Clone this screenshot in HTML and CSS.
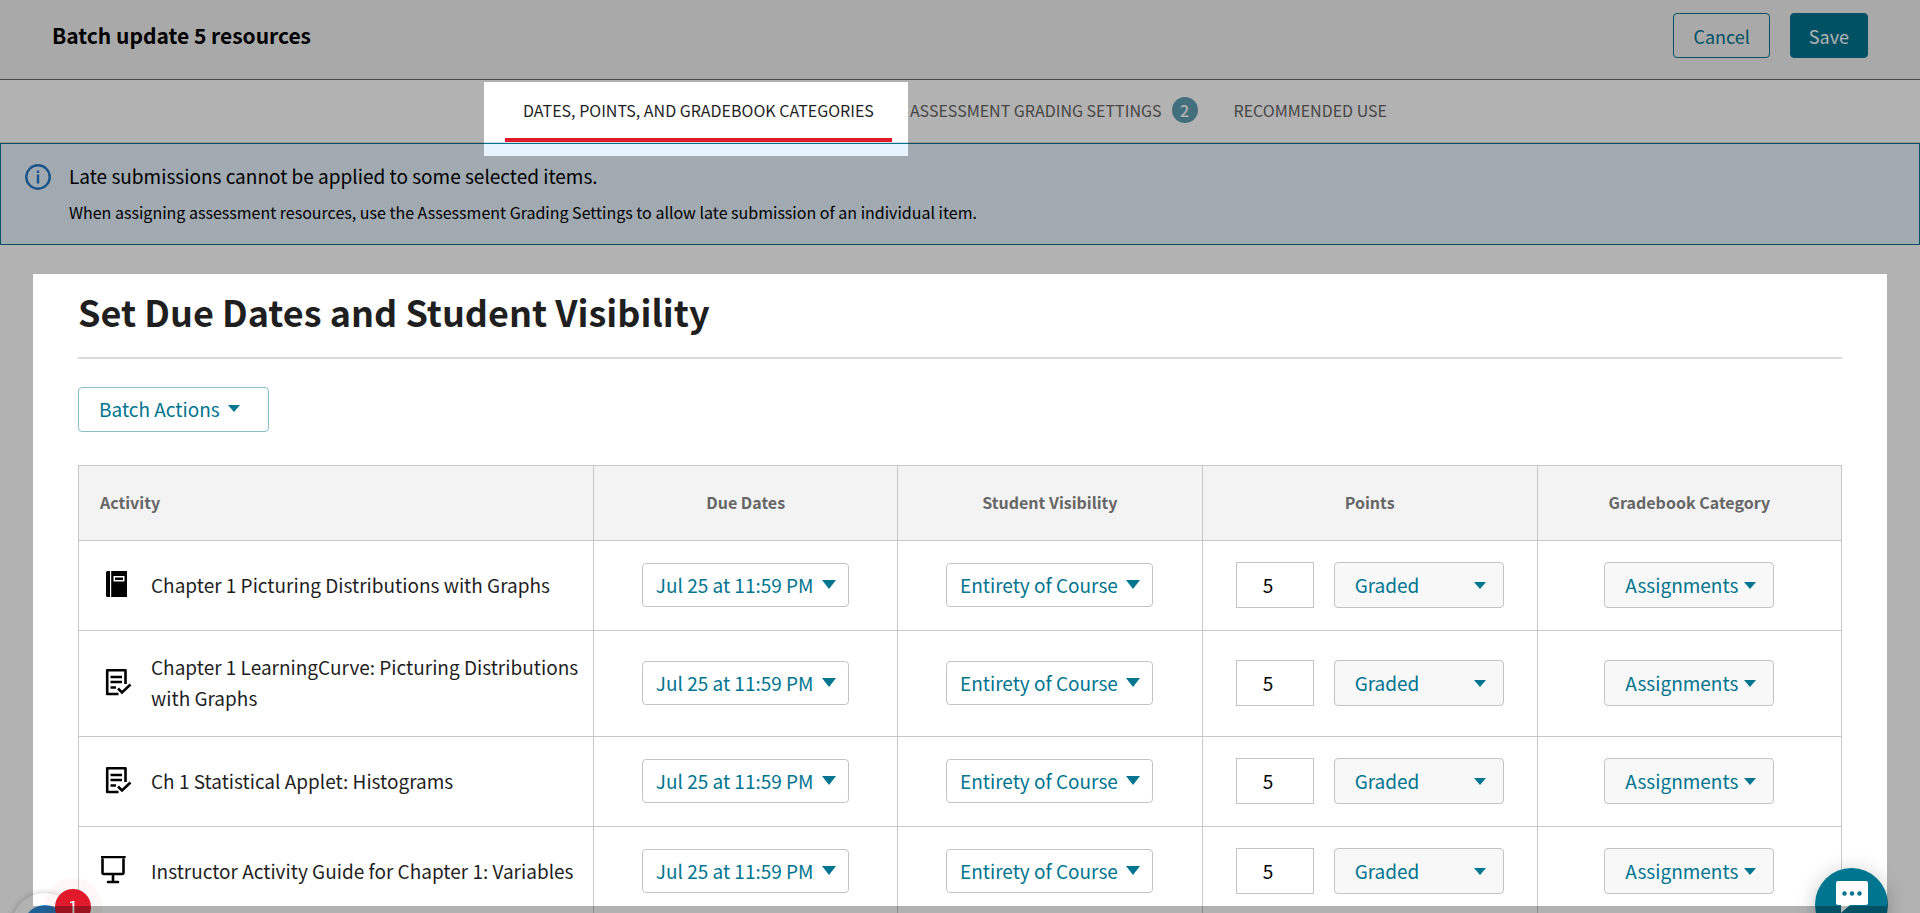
FILE: index.html
```html
<!DOCTYPE html>
<html lang="en">
  <head>
    <meta charset="UTF-8" />
    <meta name="viewport" content="width=device-width, initial-scale=1.0" />
    <title>Batch update 5 resources</title>
    <link rel="stylesheet" href="styles.css">
  </head>
  <body>
    <!-- shared icons -->
    <svg class="sprite" aria-hidden="true">
      <symbol id="icon-book" viewBox="0 0 32 28">
        <path d="M6.500 1H9V27H6.500Q5 27 5 25.500V2.500Q5 1 6.500 1Z" />
        <path fill-rule="evenodd" d="M10.200 1H26V27H10.200ZM12.500 6V11.500H23.500V6ZM14 7.500H22V10H14Z" />
      </symbol>
      <symbol id="icon-quiz" viewBox="0 0 32 28">
        <path d="M17.500 26H6.200V2.200H24.500V16M9.500 9H21M9.500 14H21M9.500 19.500H15" fill="none" stroke="currentColor" stroke-width="2.600" stroke-linejoin="round" />
        <path d="M17 20.500L21 24.500L29.500 16.500" fill="none" stroke="currentColor" stroke-width="2.600" />
      </symbol>
      <symbol id="icon-board" viewBox="0 0 32 28">
        <path d="M.5 1H23.500M1.500 3.500V16.500Q1.500 18 3 18H21Q22.500 18 22.500 16.500V3.500M12 18V25M7 26H17" fill="none" stroke="currentColor" stroke-width="2.600" stroke-linecap="round" />
      </symbol>
    </svg>

    <header class="topbar">
      <h1>Batch update 5 resources</h1>
      <div class="topbar-actions">
        <button type="button" class="btn">Cancel</button>
        <button type="button" class="btn btn-save">Save</button>
      </div>
    </header>

    <nav class="tabs">
      <a href="#dates" class="tab active">DATES, POINTS, AND GRADEBOOK CATEGORIES</a>
      <a href="#grading" class="tab">ASSESSMENT GRADING SETTINGS <span class="count">2</span></a>
      <a href="#recommended" class="tab">RECOMMENDED USE</a>
    </nav>

    <section class="notice">
      <svg class="notice-icon" viewBox="0 0 26 26" aria-hidden="true">
        <circle cx="13" cy="13" r="11.700" fill="none" stroke="currentColor" stroke-width="2.400" />
        <path d="M11.800 10.500H14.200V19.500H11.800ZM11.800 6.500H14.200V9H11.800Z" fill="currentColor" />
      </svg>
      <div>
        <p class="notice-title">Late submissions cannot be applied to some selected items.</p>
        <p class="notice-text">When assigning assessment resources, use the Assessment Grading Settings to allow late submission of an individual item.</p>
      </div>
    </section>

    <main class="panel" id="dates">
      <h2>Set Due Dates and Student Visibility</h2>
      <button type="button" class="btn btn-batch">Batch Actions <span class="caret"></span></button>

      <table>
        <colgroup>
          <col class="col-activity" />
          <col class="col-date" />
          <col class="col-visibility" />
          <col class="col-points" />
          <col class="col-category" />
        </colgroup>
        <thead>
          <tr>
            <th>Activity</th>
            <th>Due Dates</th>
            <th>Student Visibility</th>
            <th>Points</th>
            <th>Gradebook Category</th>
          </tr>
        </thead>
        <tbody>
          <tr>
            <td>
              <div class="activity"><svg class="icon"><use href="#icon-book" /></svg><span>Chapter 1 Picturing Distributions with Graphs</span></div>
            </td>
            <td><button type="button" class="picker">Jul 25 at 11:59 PM <span class="caret"></span></button></td>
            <td><button type="button" class="picker">Entirety of Course <span class="caret"></span></button></td>
            <td>
              <div class="points">
                <input type="text" value="5" aria-label="Points" />
                <span class="select"><select aria-label="Grading"><option>Graded</option></select></span>
              </div>
            </td>
            <td><span class="select"><select aria-label="Category"><option>Assignments</option></select></span></td>
          </tr>
          <tr>
            <td>
              <div class="activity"><svg class="icon"><use href="#icon-quiz" /></svg><span>Chapter 1 LearningCurve: Picturing Distributions with Graphs</span></div>
            </td>
            <td><button type="button" class="picker">Jul 25 at 11:59 PM <span class="caret"></span></button></td>
            <td><button type="button" class="picker">Entirety of Course <span class="caret"></span></button></td>
            <td>
              <div class="points">
                <input type="text" value="5" aria-label="Points" />
                <span class="select"><select aria-label="Grading"><option>Graded</option></select></span>
              </div>
            </td>
            <td><span class="select"><select aria-label="Category"><option>Assignments</option></select></span></td>
          </tr>
          <tr>
            <td>
              <div class="activity"><svg class="icon"><use href="#icon-quiz" /></svg><span>Ch 1 Statistical Applet: Histograms</span></div>
            </td>
            <td><button type="button" class="picker">Jul 25 at 11:59 PM <span class="caret"></span></button></td>
            <td><button type="button" class="picker">Entirety of Course <span class="caret"></span></button></td>
            <td>
              <div class="points">
                <input type="text" value="5" aria-label="Points" />
                <span class="select"><select aria-label="Grading"><option>Graded</option></select></span>
              </div>
            </td>
            <td><span class="select"><select aria-label="Category"><option>Assignments</option></select></span></td>
          </tr>
          <tr>
            <td>
              <div class="activity"><svg class="icon"><use href="#icon-board" /></svg><span>Instructor Activity Guide for Chapter 1: Variables</span></div>
            </td>
            <td><button type="button" class="picker">Jul 25 at 11:59 PM <span class="caret"></span></button></td>
            <td><button type="button" class="picker">Entirety of Course <span class="caret"></span></button></td>
            <td>
              <div class="points">
                <input type="text" value="5" aria-label="Points" />
                <span class="select"><select aria-label="Grading"><option>Graded</option></select></span>
              </div>
            </td>
            <td><span class="select"><select aria-label="Category"><option>Assignments</option></select></span></td>
          </tr>
        </tbody>
      </table>
    </main>

    <button type="button" class="help" aria-label="Help"><span class="help-dot"></span><span class="help-count">1</span></button>
    <button type="button" class="chat" aria-label="Chat">
      <svg viewBox="0 0 32 32" aria-hidden="true">
        <path d="M2 0H30Q32 0 32 2V22Q32 24 30 24H14L5 32V24H2Q0 24 0 22V2Q0 0 2 0Z" fill="#fff" />
        <g fill="#00758f"><circle cx="8.500" cy="12.500" r="2.200" /><circle cx="16" cy="12.500" r="2.200" /><circle cx="23.500" cy="12.500" r="2.200" /></g>
      </svg>
    </button>

    <!-- tour backdrop, open over the active tab and the panel -->
    <div class="backdrop"></div>
  </body>
</html>
```
FILE: styles.css
```css
* {
  box-sizing: border-box;
}
body {
  margin: 0;
  height: 100vh;
  overflow: hidden;
  background-color: #fff;
  color: #1f1f1f;
  font-family: "Noto Sans CJK SC", "Noto Sans", sans-serif;
  font-size: 19px;
  line-height: 31px;
}
button,
input,
select {
  font-family: inherit;
  font-size: 19px;
}
h1,
h2,
p {
  margin: 0;
}
.sprite {
  display: none;
}

/* top bar */
.topbar {
  display: flex;
  align-items: center;
  justify-content: space-between;
  height: 80px;
  padding: 0 52px 8px;
  background-color: #f3f3f3;
  border-bottom: 1px solid #6a6a6a;
}
.topbar h1 {
  color: #000;
  font-size: 21px;
  font-weight: 600;
}
.topbar-actions {
  display: flex;
  gap: 20px;
}
.btn {
  height: 45px;
  padding: 0 19px;
  border: 1px solid #00758f;
  border-radius: 4px;
  background-color: transparent;
  color: #00758f;
  font-size: 18px;
  cursor: pointer;
}
.btn-save {
  padding: 0 18px;
  background-color: #00758f;
  color: #fff;
}

/* tabs */
.tabs {
  display: flex;
  justify-content: center;
  height: 63px;
  padding-right: 10px;
  border-bottom: 1px solid #d8d8d8;
}
.tab {
  display: flex;
  align-items: center;
  gap: 10px;
  padding: 2px 18px 0;
  border-bottom: 4px solid transparent;
  color: #666;
  font-size: 16px;
  text-decoration: none;
}
.tab.active {
  border-color: #e01a2b;
  color: #1f1f1f;
}
.count {
  width: 26px;
  height: 26px;
  border-radius: 50%;
  background-color: #5fa0b2;
  color: #fff;
  font-size: 16px;
  font-weight: 500;
  line-height: 26px;
  text-align: center;
}

/* notice */
.notice {
  display: flex;
  gap: 18px;
  padding: 16px 24px;
  border: 1px solid #00758f;
  background-color: #e7f3fe;
  color: #000;
}
.notice-icon {
  flex: none;
  width: 26px;
  height: 26px;
  margin-top: 4px;
  color: #2378c4;
}
.notice-title {
  margin-bottom: 6px;
}
.notice-text {
  font-size: 16px;
}

/* panel */
.panel {
  padding: 28px 78px 0;
}
h2 {
  padding: 14px 0 22px;
  border-bottom: 2px solid #dbdbdb;
  font-size: 36px;
  font-weight: 600;
  line-height: 48px;
}
.btn-batch {
  display: flex;
  align-items: center;
  gap: 8px;
  margin: 28px 0 33px;
  padding: 0 28px 2px 20px;
  border-color: #8cbdcb;
  font-size: 19px;
}
.caret,
.select::after {
  width: 0;
  height: 0;
  border: 6px solid transparent;
  border-top: 7px solid #00758f;
  border-bottom: 0;
}
table {
  width: 100%;
  border-collapse: collapse;
  table-layout: fixed;
}
.col-activity {
  width: 29.2%;
}
.col-date,
.col-visibility,
.col-category {
  width: 17.25%;
}
.col-points {
  width: 19%;
}
th,
td {
  border: 1px solid #c8c8c8;
  text-align: center;
}
th {
  height: 75px;
  padding: 0 0 2px;
  background-color: #f3f3f3;
  color: #666;
  font-size: 16px;
  font-weight: 600;
}
th:first-child {
  padding-left: 21px;
  text-align: left;
}
td {
  padding: 21px 0 22px;
}
td:first-child {
  padding: 20px 0 23px;
}
.activity {
  display: flex;
  align-items: center;
  gap: 18px;
  padding: 0 8px 0 22px;
  text-align: left;
}
.icon {
  flex: none;
  width: 32px;
  height: 28px;
  color: #000;
}
.picker {
  display: flex;
  align-items: center;
  justify-content: center;
  gap: 8px;
  width: 207px;
  height: 44px;
  margin: 0 auto;
  padding: 0 0 2px;
  border: 1px solid #c4c4c4;
  border-radius: 4px;
  background-color: #fff;
  color: #00758f;
  cursor: pointer;
}
.picker .caret {
  border-width: 9px 7px 0;
}
.points {
  display: flex;
  justify-content: center;
  gap: 20px;
}
.points input {
  width: 78px;
  height: 46px;
  padding: 0 26px 2px;
  border: 1px solid #c4c4c4;
  color: #000;
}
.select {
  position: relative;
  display: block;
  width: 170px;
  margin: 0 auto;
}
.points .select {
  margin: 0;
}
.select select {
  display: block;
  appearance: none;
  width: 100%;
  height: 46px;
  padding: 0 20px 2px;
  border: 1px solid #c4c4c4;
  border-radius: 4px;
  background-color: #f8f8f8;
  color: #00758f;
}
.select::after {
  content: "";
  position: absolute;
  top: 20px;
  right: 18px;
  pointer-events: none;
}

/* floating buttons */
.help {
  position: fixed;
  left: 11px;
  bottom: -48px;
  width: 68px;
  height: 68px;
  padding: 0;
  border: none;
  border-radius: 50%;
  background-color: #fff;
  box-shadow: 0 0 6px rgba(0, 0, 0, 0.25);
}
.help-dot {
  display: block;
  width: 44px;
  height: 44px;
  margin: auto;
  border-radius: 50%;
  background-color: #2a8bd6;
}
.help-count {
  position: absolute;
  top: -4px;
  left: 44px;
  width: 36px;
  height: 36px;
  border-radius: 50%;
  background-color: #e01a2b;
  box-shadow: 0 0 0 11px rgba(224, 26, 43, 0.04);
  color: #fff;
  line-height: 36px;
}
.chat {
  display: flex;
  align-items: flex-start;
  justify-content: center;
  position: fixed;
  right: 32px;
  bottom: -28px;
  width: 73px;
  height: 73px;
  padding: 13px 0 0;
  border: none;
  border-radius: 50%;
  background-color: #00758f;
  box-shadow: 0 4px 20px rgba(0, 0, 0, 0.25);
}
.chat svg {
  width: 32px;
  height: 32px;
}

.backdrop {
  position: fixed;
  inset: 0;
  background-color: rgba(0, 0, 0, 0.3);
  pointer-events: none;
  clip-path: polygon(
    evenodd,
    0 0, 100% 0, 100% 100%, 0 100%, 0 0,
    calc(50% - 476px) 82px, calc(50% - 52px) 82px, calc(50% - 52px) 156px, calc(50% - 476px) 156px, calc(50% - 476px) 82px,
    0 0,
    33px 274px, calc(100% - 33px) 274px, calc(100% - 33px) calc(100% - 7px), 33px calc(100% - 7px), 33px 274px,
    0 0
  );
}
```
